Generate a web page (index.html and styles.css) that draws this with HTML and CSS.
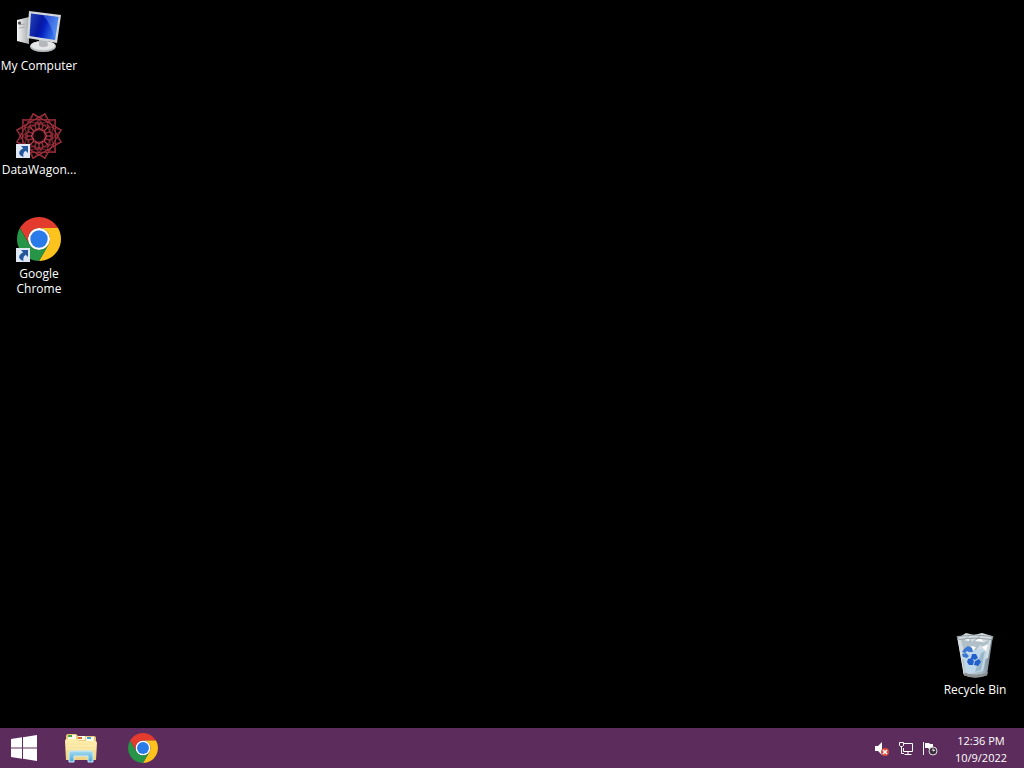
FILE: index.html
```html
<!DOCTYPE html>
<html lang="en">
<head>
<meta charset="utf-8">
<title>Desktop</title>
<link rel="stylesheet" href="styles.css">
</head>
<body>
<svg class="defs" aria-hidden="true">
  <defs>
    <linearGradient id="screen" x1="0" y1="0" x2="1" y2="0.3">
      <stop offset="0" stop-color="#2444b8"/><stop offset="0.45" stop-color="#0718a0"/><stop offset="0.6" stop-color="#0420c0"/><stop offset="1" stop-color="#3a78e8"/>
    </linearGradient>
    <linearGradient id="metal" x1="0" y1="0" x2="1" y2="0">
      <stop offset="0" stop-color="#f4f5f5"/><stop offset="1" stop-color="#a9adb0"/>
    </linearGradient>
    <linearGradient id="glass" x1="0" y1="0" x2="1" y2="0">
      <stop offset="0" stop-color="#8d9ca6"/><stop offset="0.25" stop-color="#c5d3dc"/><stop offset="0.7" stop-color="#a5b8c5"/><stop offset="1" stop-color="#6a7880"/>
    </linearGradient>
    <linearGradient id="folder" x1="0" y1="0" x2="0" y2="1">
      <stop offset="0" stop-color="#fff0ae"/><stop offset="1" stop-color="#efd080"/>
    </linearGradient>
    <linearGradient id="stand" x1="0" y1="0" x2="0" y2="1">
      <stop offset="0" stop-color="#a5dcf0"/><stop offset="1" stop-color="#4aa3d4"/>
    </linearGradient>
    <symbol id="chrome" viewBox="0 0 48 48">
      <circle cx="24" cy="24" r="12" fill="#fff"/>
      <path fill="#e33b2e" d="M24 12H44.78a24 24 0 0 0-41.56 0L13.61 30A12 12 0 0 1 24 12Z"/>
      <path fill="#fcc31e" d="M34.39 30 24 48A24 24 0 0 0 44.78 12H24A12 12 0 0 1 34.39 30Z"/>
      <path fill="#269547" d="M13.61 30 3.22 12A24 24 0 0 0 24 48L34.39 30A12 12 0 0 1 13.61 30Z"/>
      <circle cx="24" cy="24" r="9.5" fill="#2a7be9"/>
    </symbol>
    <symbol id="shortcut" viewBox="0 0 14 14">
      <path d="M0 0h14v14H0z" fill="#dfe8f2"/>
      <path d="M5 2h7v7L9.700 6.800Q6.500 8.500 7.500 13Q2 11 3.500 7.500Q4.500 5.500 7.200 4.300Z" fill="#24589e"/>
    </symbol>
    <g id="square" fill="none">
      <path d="M24 1 47 24 24 47 1 24Z" stroke="#a8323f"/>
    </g>
    <g id="triangle" fill="none">
      <path d="M24 1 44 35.500H4Z" stroke="#74242d"/>
    </g>
    <g id="loop" fill="none">
      <circle cx="24" cy="14" r="4" stroke="#98303c"/>
      <path d="M24 11v6M20 19l4-3 4 3" stroke="#c24352"/>
    </g>
  </defs>
</svg>

<main class="desktop">
  <nav class="column" aria-label="Desktop icons">
    <a class="item" href="#computer">
      <svg class="icon" viewBox="0 0 48 48" aria-hidden="true">
        <path d="M2 12 14 9v27L2 33Z" fill="url(#metal)"/>
        <path d="M4 17l6-1M4 20l6-1" stroke="#aaa"/>
        <circle cx="4.500" cy="15" r="1.500" fill="#444"/>
        <ellipse cx="28" cy="38.500" rx="13" ry="5.500" fill="#b9bcbe"/>
        <ellipse cx="28" cy="37.500" rx="12" ry="4.500" fill="#e4e6e6"/>
        <path d="M24 31h8l1 7q-5 2-9 0Z" fill="#b4b8bb"/>
        <path d="M14 3 46 7 42 35 12 30Z" fill="#d3d7d9"/>
        <path d="M16 5.500 43.500 9 40 32 14.500 28Z" fill="url(#screen)"/>
        <path d="M28 7l15.500 2L40 32Q37 17 28 7Z" fill="#75a8ff" opacity=".4"/>
      </svg>
      <span class="label">My Computer</span>
    </a>
    <a class="item" href="#datawagon">
      <span class="linked">
        <svg class="icon" viewBox="0 0 48 48" aria-hidden="true">
          <g transform="rotate(15 24 24)">
            <use href="#triangle"/><use href="#triangle" transform="rotate(30 24 24)"/><use href="#triangle" transform="rotate(60 24 24)"/><use href="#triangle" transform="rotate(90 24 24)"/>
            <path d="M24 13a11 11 0 1 0 .1 0Z" fill="#100406"/>
            <use href="#square"/><use href="#square" transform="rotate(30 24 24)"/><use href="#square" transform="rotate(60 24 24)"/>
          </g>
          <use href="#loop"/><use href="#loop" transform="rotate(45 24 24)"/><use href="#loop" transform="rotate(90 24 24)"/><use href="#loop" transform="rotate(135 24 24)"/><use href="#loop" transform="rotate(180 24 24)"/><use href="#loop" transform="rotate(225 24 24)"/><use href="#loop" transform="rotate(270 24 24)"/><use href="#loop" transform="rotate(315 24 24)"/>
        </svg>
        <svg class="arrow" aria-hidden="true"><use href="#shortcut"/></svg>
      </span>
      <span class="label">DataWagon...</span>
    </a>
    <a class="item" href="#chrome-app">
      <span class="linked">
        <svg class="icon" viewBox="0 0 48 48" aria-hidden="true"><use href="#chrome" x="2" y="1" width="44" height="44"/></svg>
        <svg class="arrow" aria-hidden="true"><use href="#shortcut"/></svg>
      </span>
      <span class="label">Google Chrome</span>
    </a>
  </nav>
  <nav class="column column-end" aria-label="Recycle Bin">
    <a class="item" href="#recycle">
      <svg class="icon" viewBox="0 0 48 48" aria-hidden="true">
        <path d="M6 4 42 4 36 43Q24 48 13 43Z" fill="url(#glass)"/>
        <path d="M7 6 15 1l8 2 8-2 10 3-4 22-10 4-16-3Z" fill="#d3dce1"/>
        <path d="M10 8l8-4 3 6 8-7 3 8 7-4-4 9-6-3-5 7-6-5-5 4Z" fill="#b0bfc8"/>
        <path d="M13 8l6-3-1 4ZM24 9l6-4 2 5ZM31 15l6-3-2 7ZM20 14l5 1-3 4Z" fill="#fff"/>
        <path d="M12 20l20-3 4 4-4 18-16 3Z" fill="#bfd8e9"/>
        <path d="M30 21l4-2-4 19-6 2Z" fill="#8faabc" opacity=".7"/>
        <path d="M13 17l4-3 4 2 1 4-4 0-2-1-2 2-3-1ZM11 22l4-1 3 3-2 2-4-1Z" fill="#3c76d0"/>
        <path d="M21 22l4 0 2 4-3 2-4-2ZM17 27l4-1 2 3-1 4-4 0-2-3ZM24 29l4-2 2 3-3 4-4-1Z" fill="#2360cc"/>
        <path d="M6 4.500q18-3 36 0l-1 3q-17-3-34 0Z" fill="none" stroke="#939ca1"/>
        <path d="M12 40q12 5 25 0l-1 3.500q-12 4-23 0Z" fill="#8e9292"/>
        <path d="M7 7l6 35" stroke="#eef4f7" opacity=".8"/>
      </svg>
      <span class="label">Recycle Bin</span>
    </a>
  </nav>
</main>

<footer class="taskbar">
  <button class="task start" aria-label="Start">
    <svg width="26" height="26" viewBox="0 0 26 26" aria-hidden="true"><path fill="#fff" d="M0 4 11 2.300V12.500H0ZM12 2.200 26 0V12.500H12ZM0 13.500H11V23.700L0 22ZM12 13.500H26V26L12 23.800Z"/></svg>
  </button>
  <button class="task" aria-label="File Explorer">
    <svg width="34" height="30" viewBox="0 0 34 30" aria-hidden="true">
      <path d="M2 3q0-2 2-2h8l2 2h16q2 0 2 2v20H2Z" fill="#e8cb78"/>
      <path d="M4 2h8v4H4ZM14 3h7v4h-7ZM22 4h8v4h-8Z" fill="#fffbe8"/>
      <path d="M4 2h4v2H4Z" fill="#47a447"/><path d="M14 4h4v2h-4Z" fill="#d46434"/><path d="M23 4h4v2h-4Z" fill="#46a0d7"/>
      <path d="M1 8q0-2 2-2h10l2 2h16q2 0 2 2l-1 17H2Z" fill="url(#folder)"/>
      <path d="M2 13h30M2 16h30" stroke="#fff5c5" opacity=".7"/>
      <path d="M5 29V20q0-2 2-2h20q2 0 2 2v9h-5v-6H10v6Z" fill="url(#stand)" stroke="#c8edf8"/>
    </svg>
  </button>
  <button class="task" aria-label="Google Chrome">
    <svg width="30" height="30" aria-hidden="true"><use href="#chrome"/></svg>
  </button>
  <div class="tray">
    <button class="status" aria-label="Volume muted">
      <svg width="16" height="16" viewBox="0 0 16 16" aria-hidden="true"><path d="M1 5h3l4-4v13l-4-4H1Z" fill="#fff"/><circle cx="11" cy="11" r="4" fill="#d94b3c"/><path d="M9 9l4 4M13 9l-4 4" stroke="#fff" stroke-width="1.500"/></svg>
    </button>
    <button class="status" aria-label="Network">
      <svg width="16" height="16" viewBox="0 0 16 16" aria-hidden="true"><path d="M6 2.500h8.500v8H5.500V7M10 10.500v3M6.500 13.500h7M1.500 1.500h4v3l-1 1h-2l-1-1ZM3.500 5.500v7H6" fill="none" stroke="#fff"/></svg>
    </button>
    <button class="status" aria-label="Action Center">
      <svg width="16" height="16" viewBox="0 0 16 16" aria-hidden="true"><path d="M1.500 1v13" stroke="#fff"/><path d="M3 2h4l1 1h3v5H7L6 7H3Z" fill="#fff"/><circle cx="11" cy="10" r="4" fill="#3d303f" stroke="#ddd"/><path d="M11 7.500V10l2-1" fill="none" stroke="#fff"/></svg>
    </button>
    <button class="clock"><time datetime="2022-10-09T12:36"><span>12:36 PM</span><span>10/9/2022</span></time></button>
  </div>
</footer>
</body>
</html>
```
FILE: styles.css
```css
* {
  box-sizing: border-box;
}

body {
  margin: 0;
  min-height: 100vh;
  display: flex;
  flex-direction: column;
  background: #000;
  color: #fff;
  font: 12px/15px "Open Sans", "Noto Sans", sans-serif;
}

.defs {
  position: absolute;
  width: 0;
  height: 0;
}

button {
  margin: 0;
  padding: 0;
  border: 0;
  background: none;
  color: inherit;
  font: inherit;
}

svg {
  display: block;
}

.desktop {
  flex: 1;
  display: flex;
  justify-content: space-between;
  padding-right: 10px;
}

.column {
  display: flex;
  flex-direction: column;
}

.column-end {
  justify-content: flex-end;
}

.item {
  width: 78px;
  height: 104px;
  padding-top: 8px;
  display: flex;
  flex-direction: column;
  align-items: center;
  gap: 2px;
  color: inherit;
  text-align: center;
  text-decoration: none;
}

.icon {
  width: 48px;
  height: 48px;
}

.linked {
  position: relative;
}

.arrow {
  position: absolute;
  left: 1px;
  bottom: 2px;
  width: 14px;
  height: 14px;
}

.taskbar {
  height: 40px;
  display: flex;
  align-items: center;
  background: #5c2d5c;
}

.task {
  width: 62px;
  height: 40px;
  display: flex;
  align-items: center;
  justify-content: center;
}

.start {
  width: 50px;
  padding-right: 2px;
}

.tray {
  margin-left: auto;
  display: flex;
  align-items: center;
  gap: 8px;
  padding-right: 8px;
}

.status {
  padding-top: 2px;
}

.clock {
  width: 70px;
  padding-top: 2px;
  font-size: 11px;
  line-height: 17px;
}

.clock time {
  display: flex;
  flex-direction: column;
  align-items: center;
}
```
